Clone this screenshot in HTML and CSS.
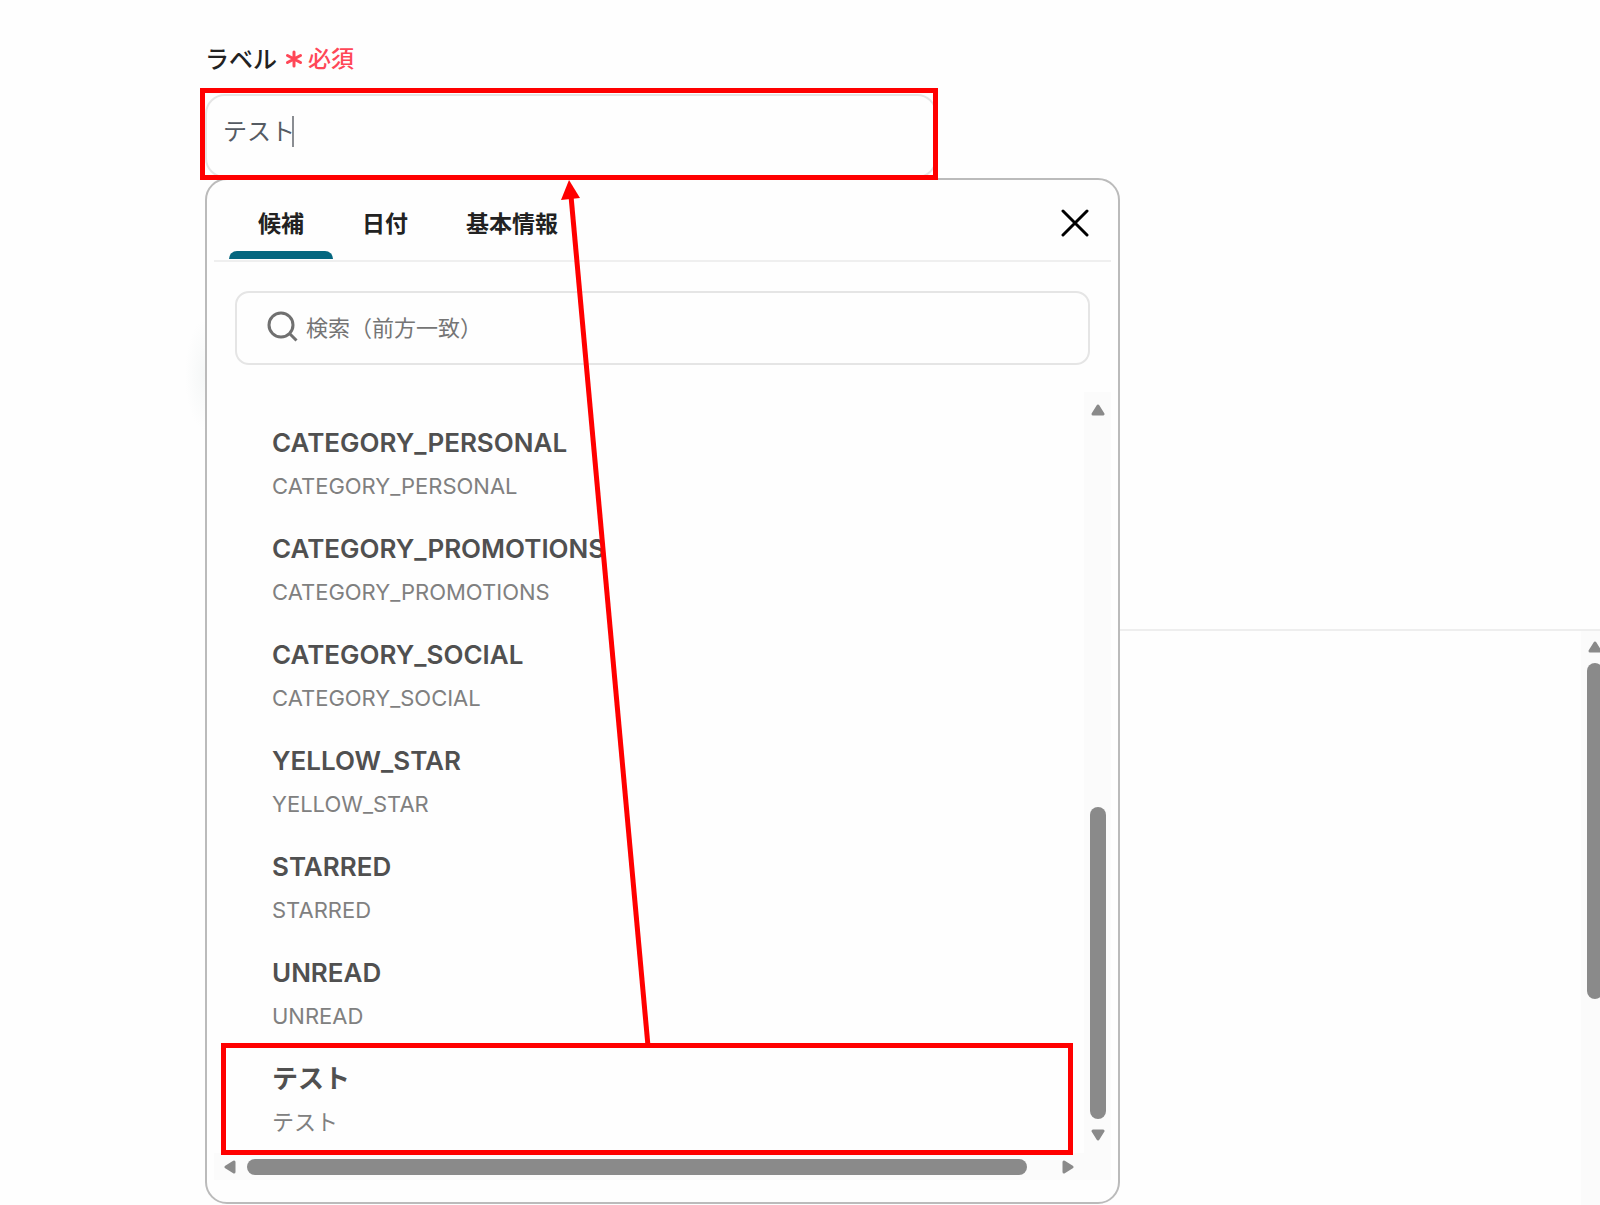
FILE: index.html
```
<!DOCTYPE html>
<html lang="ja">
<head>
    <meta charset="UTF-8">
    <meta name="viewport" content="width=device-width, initial-scale=1.0">
    <title>ラベル</title>
    <link rel="stylesheet" href="styles.css">
</head>
<body>

    <div class="page">
        <main class="form">
            <div class="label-row">
                <label for="label-input">ラベル</label>
                <span class="required">
                    <svg width="18" height="22" viewBox="0 0 18 22" aria-hidden="true">
                        <path d="M9 6v14M2.500 9.500l13 7M15.500 9.500l-13 7"/>
                    </svg>
                    必須
                </span>
            </div>

            <div class="field marked">
                <input type="text" id="label-input" value="テスト">
                <span class="caret"></span>
            </div>

            <section class="panel">
                <div class="panel-head">
                    <div class="tabs" role="tablist">
                        <button class="tab active" role="tab" aria-selected="true">候補</button>
                        <button class="tab" role="tab">日付</button>
                        <button class="tab" role="tab">基本情報</button>
                    </div>
                    <button class="close" aria-label="閉じる">
                        <svg width="28" height="28" viewBox="0 0 28 28">
                            <path d="M2 2l24 24M26 2L2 26"/>
                        </svg>
                    </button>
                </div>

                <div class="search">
                    <svg width="32" height="32" viewBox="0 0 32 32" aria-hidden="true">
                        <circle cx="14" cy="13" r="12"/>
                        <path d="M22 21l7.500 7.500"/>
                    </svg>
                    <input type="text" placeholder="検索（前方一致）" aria-label="検索">
                </div>

                <div class="scroll-area">
                    <ul class="options">
                        <li><button class="option"><b>CATEGORY_PERSONAL</b><span>CATEGORY_PERSONAL</span></button></li>
                        <li><button class="option"><b>CATEGORY_PROMOTIONS</b><span>CATEGORY_PROMOTIONS</span></button></li>
                        <li><button class="option"><b>CATEGORY_SOCIAL</b><span>CATEGORY_SOCIAL</span></button></li>
                        <li><button class="option"><b>YELLOW_STAR</b><span>YELLOW_STAR</span></button></li>
                        <li><button class="option"><b>STARRED</b><span>STARRED</span></button></li>
                        <li><button class="option"><b>UNREAD</b><span>UNREAD</span></button></li>
                        <li class="marked"><button class="option"><b>テスト</b><span>テスト</span></button></li>
                    </ul>
                    <div class="bar bar-y">
                        <svg width="14" height="12" viewBox="0 0 14 12"><path d="M7 2l5 8H2z"/></svg>
                        <div class="track"><div class="thumb"></div></div>
                        <svg width="14" height="12" viewBox="0 0 14 12"><path d="M7 10l5-8H2z"/></svg>
                    </div>
                    <div class="bar bar-x">
                        <svg width="12" height="14" viewBox="0 0 12 14"><path d="M2 7l8-5v10z"/></svg>
                        <div class="track"><div class="thumb"></div></div>
                        <svg width="12" height="14" viewBox="0 0 12 14"><path d="M10 7L2 2v10z"/></svg>
                    </div>
                    <div class="corner"></div>
                </div>
            </section>

            <!-- arrow from the chosen option up to the field -->
            <svg class="arrow" width="100" height="866" viewBox="0 0 100 866" aria-hidden="true">
                <path class="line" d="M88 866L11 16"/>
                <path class="head" d="M9 0l11 18-19 2z"/>
            </svg>
        </main>

        <aside class="side">
            <div class="bar bar-y">
                <svg width="14" height="12" viewBox="0 0 14 12"><path d="M7 2l5 8H2z"/></svg>
                <div class="track"><div class="thumb"></div></div>
            </div>
        </aside>
    </div>

</body>
</html>
```
FILE: styles.css
```
* {
    box-sizing: border-box;
}
body {
    margin: 0;
    font-family: Inter, "Noto Sans CJK JP", sans-serif;
    background: #fefefe;
    color: #222;
}
button, input {
    font-family: inherit;
    color: inherit;
    border: none;
    background: none;
    padding: 0;
    margin: 0;
    outline: none;
}
.page {
    display: flex;
    min-height: 100vh;
    overflow: hidden;
}
.form {
    position: relative;
    flex: 0 1 915px;
    margin-left: 205px;
    padding-top: 40px;
}
.label-row {
    display: flex;
    align-items: center;
    gap: 8px;
    height: 34px;
    margin-bottom: 20px;
    font-size: 24px;
    font-weight: 500;
}
.required {
    display: flex;
    align-items: center;
    gap: 5px;
    color: #ff4757;
    font-size: 23px;
    font-weight: 500;
}
.required svg {
    fill: none;
    stroke: #ff4757;
    stroke-width: 3;
    stroke-linecap: round;
}

/* field */
.field {
    position: relative;
    width: 80%;
}
.field input {
    display: block;
    width: 100%;
    height: 84px;
    padding: 0 16px 14px;
    border: 2px solid #e5e5e5;
    border-radius: 20px;
    font-size: 24px;
    color: #555b63;
}
.caret {
    position: absolute;
    left: 87px;
    top: 22px;
    width: 2px;
    height: 31px;
    background: #8a8d92;
}

/* red frames */
.marked {
    position: relative;
}
.marked::after {
    content: "";
    position: absolute;
    inset: -6px -1px -2px -5px;
    border: 5px solid #f00;
    pointer-events: none;
    z-index: 2;
}

/* suggestion panel */
.panel {
    padding: 0 7px 22px;
    border: 2px solid #bbb;
    border-radius: 22px;
    background: #fefefe;
}
.panel::before {
    content: "";
    position: absolute;
    left: -20px;
    top: 320px;
    width: 20px;
    height: 110px;
    background: radial-gradient(20px 55px at right, #f5f7f7, #fefefe);
}
.panel-head {
    display: flex;
    justify-content: space-between;
    align-items: center;
    height: 82px;
    padding: 0 22px 0 15px;
    border-bottom: 2px solid #efefef;
}
.tabs {
    display: flex;
    align-self: stretch;
}
.tab {
    position: relative;
    padding: 4px 29px 0;
    font-size: 23px;
    font-weight: 600;
}
.tab.active::after {
    content: "";
    position: absolute;
    left: 0;
    right: 0;
    bottom: 1px;
    height: 8px;
    border-radius: 8px 8px 0 0;
    background: #04667f;
}
.close {
    display: flex;
    padding-top: 6px;
}
.close svg {
    fill: none;
    stroke: #000;
    stroke-width: 3;
    stroke-linecap: round;
}
.search {
    display: flex;
    align-items: center;
    gap: 7px;
    height: 74px;
    margin: 29px 21px 27px;
    padding: 0 30px;
    border: 2px solid #e5e5e5;
    border-radius: 14px;
}
.search svg {
    overflow: visible;
    fill: none;
    stroke: #707070;
    stroke-width: 3;
}
.search input {
    flex: 1;
    font-size: 22px;
}
.search input::placeholder {
    color: #757575;
}

/* option list */
.scroll-area {
    display: grid;
    grid-template-columns: 1fr 27px;
    grid-template-rows: auto 27px;
}
.options {
    list-style: none;
    margin: 0;
    padding: 25px 16px 0 12px;
}
.options li {
    height: 106px;
}
.options li.marked {
    height: 100px;
}
.options li.marked::after {
    inset: -10px -5px -2px;
}
.option {
    display: flex;
    flex-direction: column;
    width: 100%;
    padding: 9px 46px 0;
    text-align: left;
}
.option b {
    font-size: 26px;
    font-weight: 600;
    line-height: 34px;
    color: #505050;
}
.option span {
    margin-top: 11px;
    font-size: 22px;
    line-height: 30px;
    color: #808080;
}

/* scrollbars */
.bar {
    display: flex;
    align-items: center;
    background: #fbfbfb;
}
.bar svg {
    flex: none;
    fill: #8a8a8a;
    stroke: #8a8a8a;
    stroke-width: 3;
    stroke-linejoin: round;
}
.track {
    display: flex;
    flex: 1;
    justify-content: flex-end;
}
.thumb {
    border-radius: 8px;
    background: #8a8a8a;
}
.bar-y {
    flex-direction: column;
    padding: 12px 0;
}
.bar-y .track {
    flex-direction: column;
    padding: 10px 0;
}
.bar-y .thumb {
    width: 16px;
    height: 45%;
}
.bar-x {
    padding: 0 10px;
}
.bar-x .track {
    justify-content: flex-start;
    padding: 0 11px;
}
.bar-x .thumb {
    width: 97%;
    height: 16px;
}
.corner {
    background: #fbfbfb;
}
.arrow {
    position: absolute;
    left: 355px;
    top: 180px;
    z-index: 3;
    pointer-events: none;
}
.arrow .line {
    fill: none;
    stroke: #f00;
    stroke-width: 5;
}
.arrow .head {
    fill: #f00;
}

/* right pane */
.side {
    flex: 1;
    display: flex;
    justify-content: flex-end;
    margin-top: 629px;
    border-top: 2px solid #eee;
}
.side .bar-y {
    width: 27px;
    margin-right: -8px;
    padding-top: 10px;
}
.side .track {
    justify-content: flex-start;
}
.side .thumb {
    height: 336px;
}
```
